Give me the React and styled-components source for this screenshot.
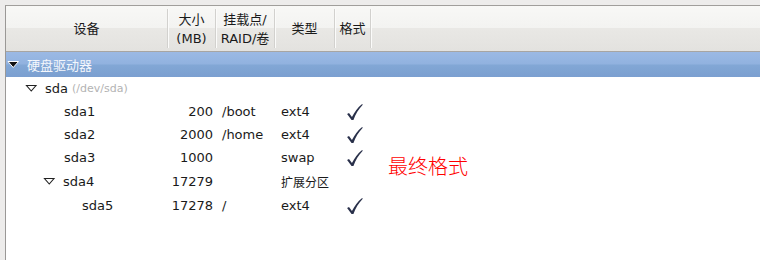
import React from 'react';
import styled, { createGlobalStyle } from 'styled-components';

const Global = createGlobalStyle`
  html, body {
    margin: 0;
    padding: 0;
    background: #edeceb;
    width: 760px;
    height: 260px;
    overflow: hidden;
  }
  body {
    font-family: 'DejaVu Sans', 'Noto Sans CJK SC', sans-serif;
    font-size: 13px;
    color: #1a1a1a;
  }
`;

const COLS = '162px 48px 59px 60px 36px 1fr';

const Frame = styled.div`
  margin: 5px 0 0 5px;
  height: 255px;
  border-top: 1px solid #a09e9b;
  border-left: 1px solid #9a9896;
  background: #ffffff;
  display: flex;
  flex-direction: column;
  box-sizing: border-box;
`;

const Header = styled.div`
  display: grid;
  grid-template-columns: ${COLS};
  height: 45px;
  border-bottom: 1px solid #a7a5a2;
  background: linear-gradient(#f8f8f6 0%, #f3f3f1 48%, #e9e8e5 50%, #e3e2df 100%);
`;

const HeadCell = styled.div`
  display: flex;
  flex-direction: column;
  align-items: center;
  justify-content: center;
  text-align: center;
  line-height: 19px;
  margin: 3px 0;
  border-right: ${p => (p.$last ? 'none' : '1px solid #d2d1ce')};
  box-shadow: ${p => (p.$last ? 'none' : '1px 0 0 #fbfbfa')};
`;

const Body = styled.div`
  display: flex;
  flex-direction: column;
`;

const GroupRow = styled.div`
  display: flex;
  align-items: center;
  height: 25px;
  padding-left: 1px;
  color: #f4f7fc;
  background: linear-gradient(#9bb9e4 0%, #91b2df 48%, #82a7d5 52%, #7b9fd0 100%);
`;

const Row = styled.div`
  display: grid;
  grid-template-columns: ${COLS};
  grid-template-rows: ${p => p.$h}px;
  align-items: center;
  height: ${p => p.$h}px;
`;

const Device = styled.div`
  display: flex;
  align-items: center;
  padding-left: ${p => p.$indent}px;
  white-space: nowrap;
`;

const Expander = styled.span`
  display: inline-flex;
  width: 20px;
  align-items: center;
`;

const Path = styled.span`
  color: #b3b3b3;
  font-size: 11px;
  margin-left: 4px;
`;

const Size = styled.div`
  text-align: right;
  padding-right: 3px;
`;

const Text = styled.div`
  padding-left: 6px;
  white-space: nowrap;
  font-size: ${p => (p.$small ? '12px' : '13px')};
`;

const Check = styled.div`
  display: flex;
  justify-content: center;
  padding-left: 2px;
`;

const NoteCell = styled.div`
  align-self: start;
`;

const Note = styled.div`
  margin-top: 10px;
  padding-left: 17px;
  color: #ff0000;
  font-size: 20px;
  font-weight: 300;
  font-family: 'Noto Sans CJK SC', sans-serif;
  white-space: nowrap;
  line-height: 20px;
`;

const Triangle = ({ filled }) => (
  <svg width="13" height="9" viewBox="0 0 13 9">
    {filled ? (
      <path d="M1 1.5 L11.5 1.5 L6.25 7.5 Z" fill="#111" stroke="#fff" strokeWidth="1" />
    ) : (
      <path d="M1.5 1.5 L11 1.5 L6.25 7 Z" fill="#fff" stroke="#222" strokeWidth="1.1" />
    )}
  </svg>
);

const Tick = () => (
  <svg width="17" height="18" viewBox="0 0 16 17">
    <path
      d="M1 10.5 L2.8 9.4 L5.6 13.3 C8 8.4 11 4.2 15.2 0.9 L15.8 1.6 C11.8 5.8 9 10.4 7 16 L5.2 16 Z"
      fill="#29304a"
    />
  </svg>
);

const rows = [
  { name: 'sda', indent: 19, expander: true, path: '(/dev/sda)', h: 23 },
  { name: 'sda1', indent: 58, size: '200', mount: '/boot', type: 'ext4', fmt: true, h: 23 },
  { name: 'sda2', indent: 58, size: '2000', mount: '/home', type: 'ext4', fmt: true, h: 23 },
  { name: 'sda3', indent: 58, size: '1000', mount: '', type: 'swap', fmt: true, h: 23, note: '最终格式' },
  { name: 'sda4', indent: 37, expander: true, size: '17279', mount: '', type: '扩展分区', small: true, h: 25 },
  { name: 'sda5', indent: 76, size: '17278', mount: '/', type: 'ext4', fmt: true, h: 23 },
];

export default function App() {
  return (
    <>
      <Global />
      <Frame>
        <Header>
          <HeadCell>设备</HeadCell>
          <HeadCell>
            <span>大小</span>
            <span>(MB)</span>
          </HeadCell>
          <HeadCell>
            <span>挂载点/</span>
            <span>RAID/卷</span>
          </HeadCell>
          <HeadCell>类型</HeadCell>
          <HeadCell>格式</HeadCell>
          <HeadCell $last />
        </Header>
        <Body>
          <GroupRow>
            <Expander>
              <Triangle filled />
            </Expander>
            硬盘驱动器
          </GroupRow>
          {rows.map(r => (
            <Row key={r.name} $h={r.h}>
              <Device $indent={r.indent}>
                {r.expander && (
                  <Expander>
                    <Triangle />
                  </Expander>
                )}
                {r.name}
                {r.path && <Path>{r.path}</Path>}
              </Device>
              <Size>{r.size}</Size>
              <Text>{r.mount}</Text>
              <Text $small={r.small}>{r.type}</Text>
              <Check>{r.fmt && <Tick />}</Check>
              <NoteCell>{r.note && <Note>{r.note}</Note>}</NoteCell>
            </Row>
          ))}
        </Body>
      </Frame>
    </>
  );
}
